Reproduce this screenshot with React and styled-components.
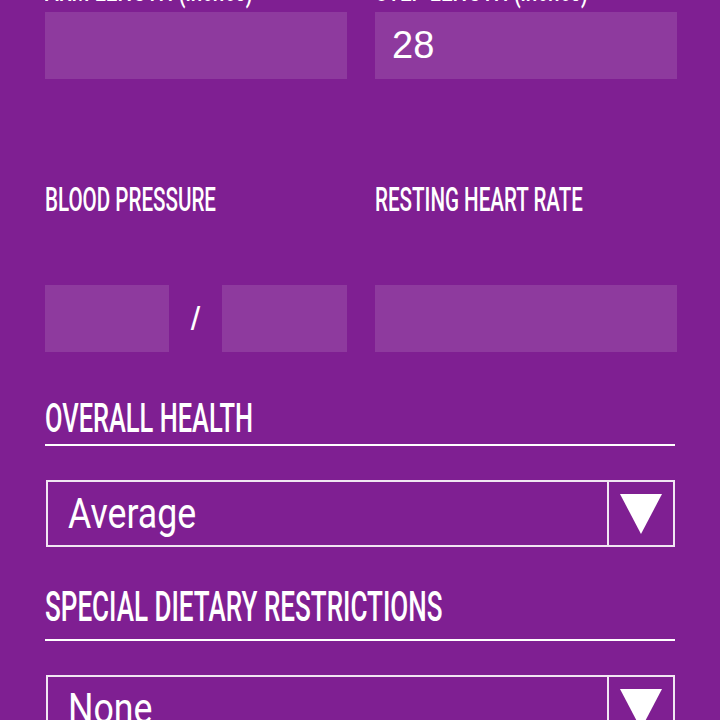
import React from "react";
import styled, { createGlobalStyle } from "styled-components";

const GlobalStyle = createGlobalStyle`
  html, body {
    margin: 0;
    padding: 0;
    background: #7f1f92;
    overflow: hidden;
  }
`;

const Page = styled.div`
  width: 720px;
  height: 720px;
  overflow: hidden;
  background: #7f1f92;
  color: #fff;
  font-family: Roboto, "Liberation Sans", sans-serif;
`;

// the form is scrolled a little, so the first labels are cut at the top
const Scroller = styled.div`
  margin-top: -30px;
  padding: 0 43px 0 45px;
`;

const Row = styled.div`
  display: grid;
  grid-template-columns: 302px 302px;
  column-gap: 28px;
  margin-top: ${({ top }) => top || 0}px;
`;

const Field = styled.div`
  display: flex;
  flex-direction: column;
`;

const Label = styled.span`
  display: inline-block;
  height: ${({ h }) => h || 40}px;
  font-size: 34px;
  line-height: ${({ h }) => h || 40}px;
  font-weight: 500;
  white-space: nowrap;
  transform: scaleX(0.605);
  transform-origin: left center;
  margin-bottom: ${({ gap }) => gap || 0}px;
`;

const TextBox = styled.div`
  height: 67px;
  background: #8e3a9e;
  box-sizing: border-box;
  padding-left: 17px;
  display: flex;
  align-items: center;
  font-family: "Liberation Sans", Arial, sans-serif;
  font-size: 38px;
  color: #fff;
`;

const Pair = styled.div`
  display: grid;
  grid-template-columns: 124px 1fr 125px;
  align-items: center;
`;

const Slash = styled.span`
  text-align: center;
  font-family: "Liberation Sans", Arial, sans-serif;
  font-size: 34px;
  font-weight: 300;
`;

const Section = styled.div`
  width: 630px;
  margin-top: ${({ top }) => top}px;
`;

const Title = styled.div`
  border-bottom: 2px solid #fff;
  height: ${({ h }) => h}px;
  box-sizing: border-box;
`;

const TitleText = styled.span`
  display: inline-block;
  font-size: ${({ size }) => size}px;
  line-height: 48px;
  font-weight: 500;
  white-space: nowrap;
  transform: scaleX(0.62);
  transform-origin: left center;
`;

const Select = styled.div`
  margin-top: 34px;
  margin-left: 1px;
  height: 67px;
  box-sizing: border-box;
  border: 2px solid #f1e6f3;
  display: grid;
  grid-template-columns: 1fr 66px;
`;

const SelectValue = styled.div`
  display: flex;
  align-items: center;
  padding-left: 20px;
  font-size: 42px;
`;

const ValueText = styled.span`
  display: inline-block;
  transform: scaleX(0.85);
  transform-origin: left center;
  white-space: nowrap;
`;

const Arrow = styled.div`
  border-left: 2px solid #f1e6f3;
  display: flex;
  align-items: center;
  justify-content: center;
`;

const Caret = () => (
  <svg width="42" height="41" viewBox="0 0 42 41">
    <polygon points="0,1 42,1 21,41" fill="#fff" />
  </svg>
);

const Dropdown = ({ value }) => (
  <Select>
    <SelectValue>
      <ValueText>{value}</ValueText>
    </SelectValue>
    <Arrow>
      <Caret />
    </Arrow>
  </Select>
);

export default function App() {
  return (
    <Page>
      <GlobalStyle />
      <Scroller>
        <Row>
          <Field>
            <Label h={38} gap={4}>ARM LENGTH (inches)</Label>
            <TextBox />
          </Field>
          <Field>
            <Label h={38} gap={4}>STEP LENGTH (inches)</Label>
            <TextBox>28</TextBox>
          </Field>
        </Row>

        <Row top={100}>
          <Field>
            <Label gap={66}>BLOOD PRESSURE</Label>
            <Pair>
              <TextBox />
              <Slash>/</Slash>
              <TextBox />
            </Pair>
          </Field>
          <Field>
            <Label gap={66}>RESTING HEART RATE</Label>
            <TextBox />
          </Field>
        </Row>

        <Section top={42}>
          <Title h={52}>
            <TitleText size={41}>OVERALL HEALTH</TitleText>
          </Title>
          <Dropdown value="Average" />
        </Section>

        <Section top={36}>
          <Title h={58}>
            <TitleText size={42}>SPECIAL DIETARY RESTRICTIONS</TitleText>
          </Title>
          <Dropdown value="None" />
        </Section>
      </Scroller>
    </Page>
  );
}
